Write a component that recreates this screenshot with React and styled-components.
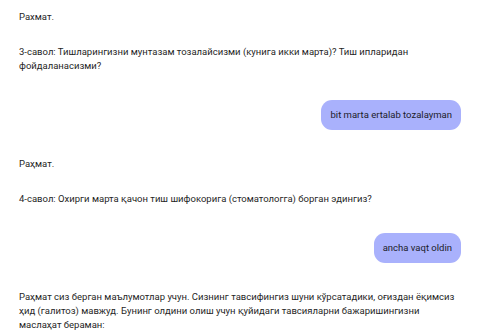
import React from 'react';
import styled, { createGlobalStyle } from 'styled-components';

const Global = createGlobalStyle`
  html, body { margin: 0; padding: 0; background: #fff; }
  body { font-family: Roboto, "Noto Sans", sans-serif; color: #1f1f1f; }
`;

const Chat = styled.div`
  display: flex;
  flex-direction: column;
  gap: 27px;
  padding: 10px 39px 0 19px;
  width: 500px;
  height: 336px;
  box-sizing: border-box;
  overflow: hidden;
`;

const BotMessage = styled.div`
  display: flex;
  flex-direction: column;
  gap: 21px;
`;

const Para = styled.p`
  margin: 0;
  font-size: 9.5px;
  line-height: 14px;
`;

const UserRow = styled.div`
  display: flex;
  justify-content: flex-end;
`;

const Bubble = styled.div`
  background: #a9b1fc;
  border-radius: 11px;
  padding: 8px 9px;
  font-size: 9.5px;
  line-height: 14px;
  color: #1c1c2a;
`;

const messages = [
  { from: 'bot', text: ['Рахмат.', '3-савол: Тишларингизни мунтазам тозалайсизми (кунига икки марта)? Тиш ипларидан фойдаланасизми?'] },
  { from: 'user', text: 'bit marta ertalab tozalayman' },
  { from: 'bot', text: ['Раҳмат.', '4-савол: Охирги марта қачон тиш шифокорига (стоматологга) борган эдингиз?'] },
  { from: 'user', text: 'ancha vaqt oldin' },
  { from: 'bot', text: ['Раҳмат сиз берган маълумотлар учун. Сизнинг тавсифингиз шуни кўрсатадики, оғиздан ёқимсиз ҳид (галитоз) мавжуд. Бунинг олдини олиш учун қуйидаги тавсияларни бажаришингизни маслаҳат бераман:'] },
];

export default function App() {
  return (
    <>
      <Global />
      <Chat>
        {messages.map((m, i) =>
          m.from === 'bot' ? (
            <BotMessage key={i}>
              {m.text.map((t, j) => <Para key={j}>{t}</Para>)}
            </BotMessage>
          ) : (
            <UserRow key={i}>
              <Bubble>{m.text}</Bubble>
            </UserRow>
          )
        )}
      </Chat>
    </>
  );
}
